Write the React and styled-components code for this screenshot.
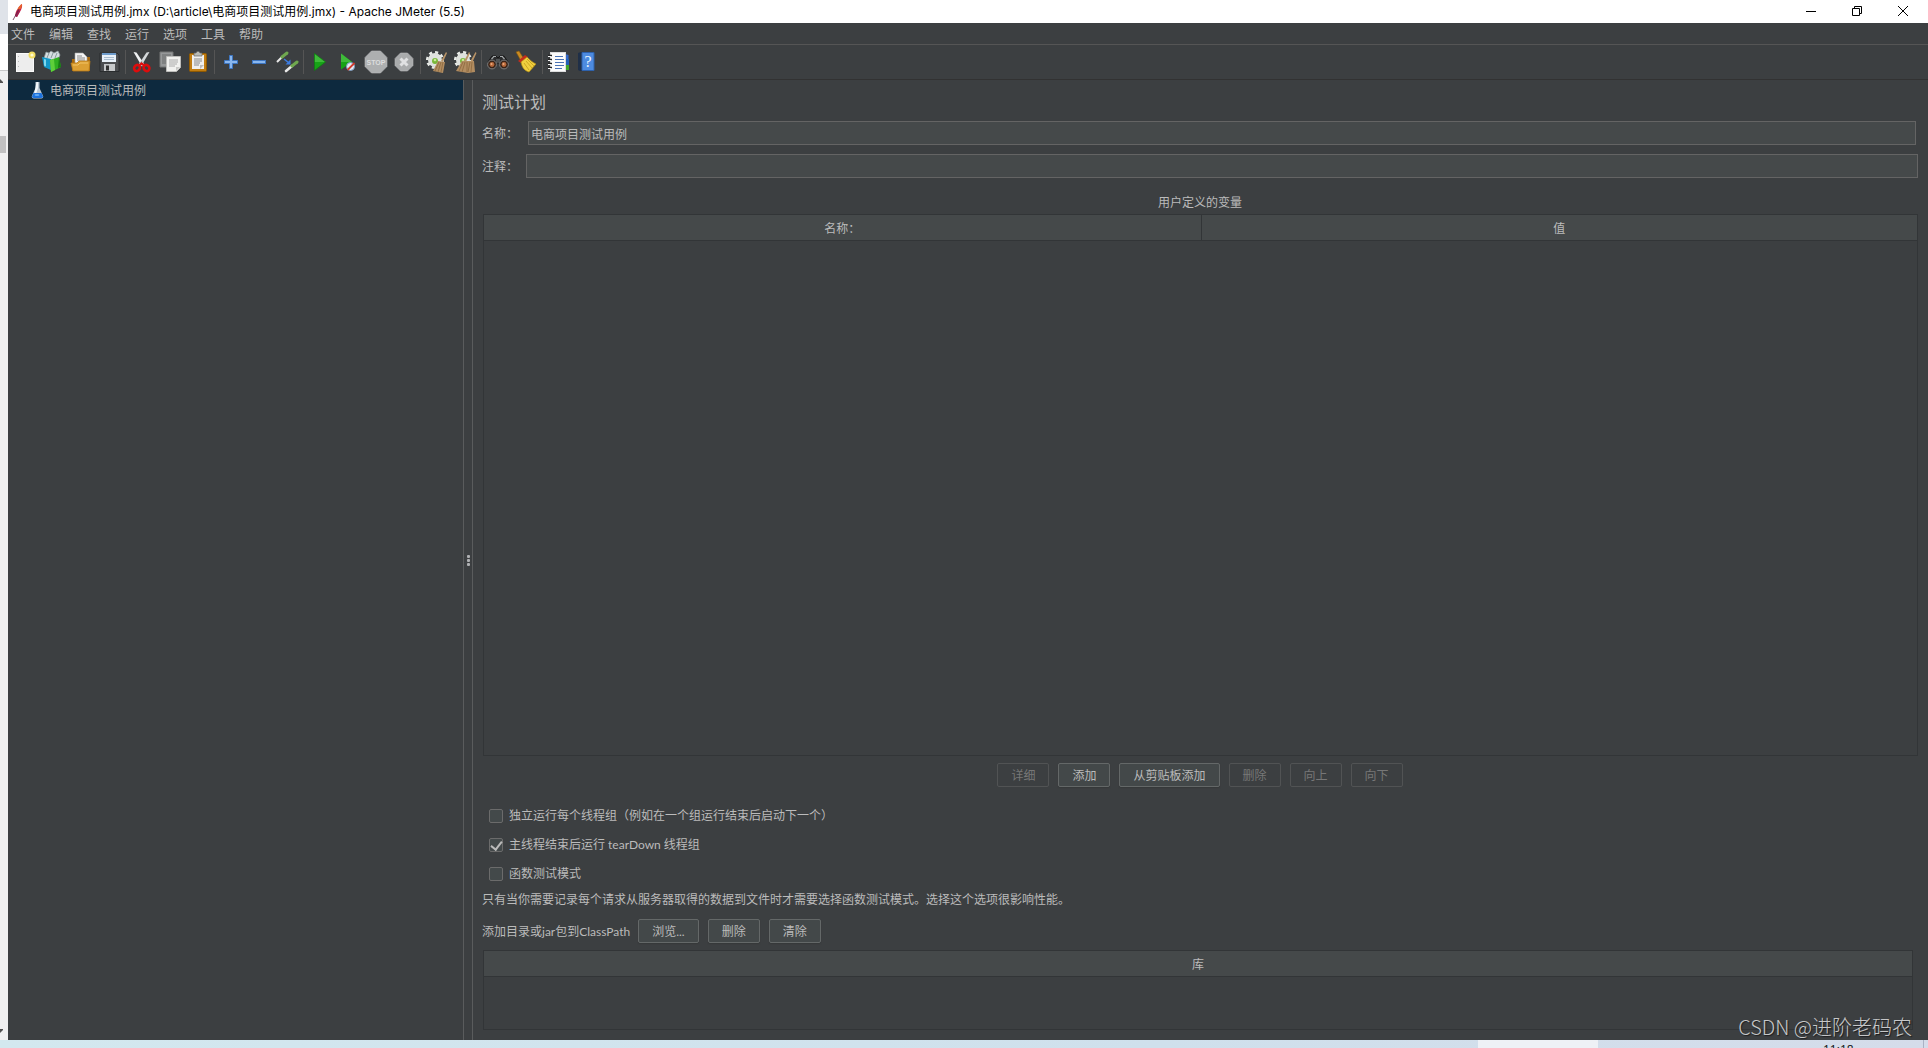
import { useState } from "react";
import styled, { createGlobalStyle, css } from "styled-components";

const GlobalStyle = createGlobalStyle`
    * {
        box-sizing: border-box;
    }
    body {
        margin: 0;
        background: #3c3f41;
        color: #bbbbbb;
        font-family: Lato, "Noto Sans CJK SC", sans-serif;
        font-size: 12px;
        line-height: 16px;
    }
    button, input {
        font: inherit;
        color: inherit;
        margin: 0;
    }
`;

const Screen = styled.div`
    position: relative;
    display: flex;
    flex-direction: column;
    min-height: 100vh;
`;

const Desktop = styled.div`
    flex: 1;
    display: flex;
`;

/* the window behind, only its scroll bar sticks out */
const BackWindow = styled.div`
    width: 8px;
    display: flex;
    flex-direction: column;
    background: #f0f0f0;
`;

const BackTabs = styled.div`
    height: 34px;
    background: #dfe3e9;
`;

const BackHeader = styled.div`
    height: 37px;
    background: #ffffff;
    border-bottom: 1px solid #c8c8c8;
`;

const BackScroll = styled.div`
    flex: 1;
    display: flex;
    flex-direction: column;
    padding: 8px 2px 7px 0;

    svg {
        display: block;
    }
`;

const BackThumb = styled.div`
    height: 17px;
    margin: 53px 0 auto;
    background: #c1c1c1;
`;

const AppWindow = styled.div`
    flex: 1;
    min-width: 0;
    display: flex;
    flex-direction: column;
    background: #3c3f41;
`;

const TitleBar = styled.header`
    display: flex;
    align-items: center;
    height: 23px;
    padding: 0 2px 0 4px;
    background: #ffffff;
    color: #000000;
`;

const WindowTitle = styled.h1`
    flex: 1;
    margin: 0 0 0 6px;
    font-family: Inter, "Noto Sans CJK SC", sans-serif;
    font-size: 12px;
    font-weight: 400;
    line-height: 20px;
`;

const WindowButton = styled.button`
    display: flex;
    align-items: center;
    justify-content: center;
    width: 46px;
    height: 20px;
    padding: 0;
    border: 0;
    background: none;
`;

const MenuBar = styled.nav`
    display: flex;
    align-items: center;
    gap: 14px;
    height: 22px;
    padding: 2px 3px 0;
    border-bottom: 1px solid #555555;
`;

const MenuItem = styled.button`
    padding: 0;
    border: 0;
    background: none;
    white-space: nowrap;
`;

const ToolBar = styled.div`
    display: flex;
    align-items: center;
    height: 35px;
    padding: 0 3px;
    border-bottom: 1px solid #323232;
`;

const ToolButton = styled.button`
    display: flex;
    align-items: center;
    justify-content: center;
    width: 28px;
    height: 28px;
    padding: 0;
    border: 0;
    background: none;
`;

const ToolSeparator = styled.span`
    width: 1px;
    height: 24px;
    margin: 0 2px;
    background: #555555;
`;

const SplitPane = styled.div`
    flex: 1;
    display: flex;
`;

const Tree = styled.aside`
    width: 456px;
    flex-shrink: 0;
    border-right: 1px solid #5a5c5d;
`;

const TreeRow = styled.div`
    display: flex;
    align-items: center;
    gap: 6px;
    height: 20px;
    padding: 2px 0 0 23px;
    background: #0d293e;
`;

const Divider = styled.div`
    display: flex;
    flex-direction: column;
    align-items: center;
    justify-content: center;
    gap: 1px;
    width: 9px;
    flex-shrink: 0;
    border-right: 1px solid #5a5c5d;
`;

const DividerDot = styled.span`
    width: 3px;
    height: 3px;
    border-radius: 1px;
    background: #afb1b3;
`;

const Panel = styled.main`
    flex: 1;
    min-width: 0;
    display: flex;
    flex-direction: column;
    padding: 10px 10px 10px 9px;
`;

const PanelTitle = styled.h2`
    margin: 0 0 7px;
    font-size: 16px;
    font-weight: 400;
    line-height: 24px;
`;

const Field = styled.div`
    display: flex;
    align-items: center;
    gap: ${(props) => (props.$inset ? "10px" : "8px")};
    padding-right: ${(props) => (props.$inset ? "2px" : "0")};
    margin-bottom: ${(props) => (props.$inset ? "9px" : "16px")};
`;

const FieldLabel = styled.label`
    width: 36px;
    flex-shrink: 0;
    padding-top: 2px;
    white-space: nowrap;
`;

const TextInput = styled.input`
    flex: 1;
    min-width: 0;
    height: 24px;
    padding: 0 2px;
    border: 1px solid #646464;
    background: #45494a;
    outline: none;
`;

const TableTitle = styled.h3`
    margin: 0 0 3px;
    padding-top: 1px;
    font-size: 12px;
    font-weight: 400;
    text-align: center;
`;

const TableBox = styled.div`
    margin-left: 1px;
    border: 1px solid #323537;
    ${(props) =>
        props.$grow
            ? css`
                  flex: 1;
              `
            : css`
                  height: 80px;
                  margin-right: 5px;
              `}
`;

const DataTable = styled.table`
    width: 100%;
    table-layout: fixed;
    border-collapse: separate;
    border-spacing: 0;

    th {
        height: 26px;
        padding: 3px 0 0;
        background: #45494a;
        border-bottom: 1px solid #323537;
        font-weight: 400;
    }
    th + th {
        border-left: 1px solid #323537;
    }
`;

const ButtonRow = styled.div`
    display: flex;
    align-items: center;
    justify-content: ${(props) => (props.$center ? "center" : "flex-start")};
    gap: 9px;
    margin: ${(props) => (props.$center ? "7px 0 14px" : "11px 0 7px")};
`;

const Button = styled.button`
    height: 24px;
    padding: 2px 13px 0;
    border: 1px solid #646868;
    border-radius: 2px;
    background: #434849;
    box-shadow: 0 1px 1px #36393a;
    white-space: nowrap;

    &:disabled {
        color: #777777;
        background: none;
        border-color: #515354;
        box-shadow: none;
    }
`;

const CheckLabel = styled.label`
    display: flex;
    align-items: center;
    align-self: flex-start;
    gap: 6px;
    height: 29px;
    padding-left: 7px;
`;

const CheckBox = styled.input`
    appearance: none;
    display: flex;
    justify-content: center;
    width: 14px;
    height: 14px;
    border: 1px solid #6b6b6b;
    border-radius: 2px;
    background: #43494a;

    &:checked::after {
        content: "";
        width: 5px;
        height: 9px;
        border: solid #bbbbbb;
        border-width: 0 2px 2px 0;
        transform: rotate(38deg);
    }
`;

const Note = styled.p`
    margin: 4px 0 0;
`;

const ClassPathLabel = styled.span`
    padding-top: 1px;
    margin-right: -1px;
`;

const Taskbar = styled.footer`
    display: flex;
    height: 8px;
    overflow: hidden;
    background: linear-gradient(90deg, #d3e8ef, #cfe0ec 60%, #d5dcea);
`;

const TaskSpace = styled.div`
    flex: 1;
`;

const ActiveTask = styled.div`
    width: 120px;
    margin-right: 225px;
    background: #eef1f6;
`;

const Clock = styled.time`
    width: 101px;
    padding-top: 2px;
    border-right: 1px solid #a9b2c4;
    color: #111111;
    font-family: "Open Sans", sans-serif;
`;

const TaskEnd = styled.div`
    width: 4px;
`;

const Watermark = styled.div`
    position: absolute;
    right: 16px;
    bottom: 7px;
    color: #c6c7c8;
    font-family: "Noto Sans CJK SC", sans-serif;
    font-size: 20px;
    font-weight: 300;
    line-height: 28px;
    text-shadow: 1px 1px 1px #1c1d1e;
    pointer-events: none;
`;

const Svg = ({ children, size = 24 }) => (
    <svg width={size} height={size} viewBox={`0 0 ${size} ${size}`} aria-hidden="true">
        {children}
    </svg>
);

const NewIcon = () => (
    <Svg>
        <rect x="3.5" y="3.5" width="17" height="18" fill="#ededed" stroke="#fafafa" />
        <path d="M5.5 6v13" stroke="#bbb" strokeDasharray="1 4" />
        <circle cx="19" cy="5" r="3.5" fill="#f1dc62" />
        <circle cx="19" cy="5" r="1.6" fill="#fffbd0" />
    </Svg>
);

const TemplatesIcon = () => (
    <Svg>
        <path d="M3 8l2-6 3 1 2-2 3 2 4-2 2 4-2 5-12 2z" fill="#d4dde0" stroke="#8b999e" strokeWidth=".7" />
        <path d="M6 8l2-5M10 8l2-5M14 8l2-5" stroke="#87969c" />
        <path d="M1 7l9 2v11l-7-3z" fill="#1398c8" />
        <path d="M3 9l2 .5v7l-2-1z" fill="#7fd8ef" />
        <path d="M9 10l9-3 2 10-10 5z" fill="#2fae20" />
        <path d="M9 10l4-1 1 11-4 2z" fill="#5ed03a" />
        <path d="M18 7l2 10-3 1z" fill="#177c13" />
    </Svg>
);

const OpenIcon = () => (
    <Svg>
        <path d="M3 9h4l2-2h12v14H3z" fill="#a8690c" />
        <path d="M6 3h8l4 4v9H6z" fill="#f4f4f4" stroke="#aaa" strokeWidth=".6" />
        <path d="M8 6h5M8 8h8M8 10h8" stroke="#888" />
        <path d="M2 13h6l2-2h11l-1 10H4z" fill="#dca034" stroke="#b87a17" strokeWidth=".8" />
        <path d="M4 15h5l2-2h8" stroke="#f2c466" fill="none" />
    </Svg>
);

const SaveIcon = () => (
    <Svg>
        <path d="M3 3h17l2 2v16.500H3z" fill="#4b4d50" stroke="#25272a" strokeWidth=".8" />
        <path d="M5 3h14v9H5z" fill="#e8f0f8" />
        <path d="M5 3h14v2H5z" fill="#6d9bcb" />
        <path d="M7 7.500h10M7 9.500h10" stroke="#a8bccf" />
        <path d="M7 14h11v7H7z" fill="#c5c7c9" />
        <path d="M9 15.500h3v5H9z" fill="#333" />
    </Svg>
);

const CutIcon = () => (
    <Svg>
        <path d="M3.500 2l3 .5 8 12-2.500 2z" fill="#f0f2f3" />
        <path d="M19.500 2l-3 .5-8 12 2.500 2z" fill="#d5d9db" />
        <path d="M12 11l-3 4" stroke="#8d9193" strokeWidth=".8" />
        <ellipse cx="7" cy="18" rx="2.800" ry="3.200" transform="rotate(35 7 18)" fill="none" stroke="#dd0d0d" strokeWidth="2.600" />
        <ellipse cx="16.500" cy="18" rx="2.800" ry="3.200" transform="rotate(-35 16.500 18)" fill="none" stroke="#dd0d0d" strokeWidth="2.600" />
        <path d="M8.500 16l3-2.500 3.500 2.500" stroke="#dd0d0d" strokeWidth="2.200" fill="none" />
    </Svg>
);

const CopyIcon = () => (
    <Svg>
        <path d="M2 2h13v15H2z" fill="#969899" stroke="#747677" />
        <path d="M4 5h9M4 7h7M4 9h5M4 11h4M4 13h4" stroke="#686a6b" />
        <path d="M8.500 6.500h14v11l-4 4h-10z" fill="#f1f1ef" stroke="#bdbdbb" />
        <path d="M11 10h9M11 12h9M11 14h8M11 16h6" stroke="#aaa" />
        <path d="M18 21v-4h4z" fill="#c9c9c7" />
    </Svg>
);

const PasteIcon = () => (
    <Svg>
        <rect x="3.500" y="3.500" width="17" height="18" rx="1" fill="#c17d11" stroke="#8f5902" />
        <path d="M6 5h12v14H6z" fill="#f0f0ee" />
        <path d="M8 9h8M8 11h8M8 13h6M8 15h5" stroke="#888" />
        <path d="M14 19v-4h4z" fill="#bbb" />
        <path d="M8 3h2l1-1.500h2L14 3h2v3H8z" fill="#b9bbb6" stroke="#666" strokeWidth=".7" />
    </Svg>
);

const PlusIcon = () => (
    <Svg>
        <path d="M10.500 5.500h3v5h5v3h-5v5h-3v-5h-5v-3h5z" fill="#8ab7ee" stroke="#3d76c2" />
    </Svg>
);

const MinusIcon = () => (
    <Svg>
        <rect x="5.500" y="10.500" width="13" height="3" fill="#8ab7ee" stroke="#3d76c2" />
    </Svg>
);

const ToggleIcon = () => (
    <Svg>
        <path d="M2 12l6-6" stroke="#e8e8e8" strokeWidth="2" />
        <path d="M7 7l5-4" stroke="#6fa84f" strokeWidth="3" strokeLinecap="round" />
        <path d="M11 21l6-5" stroke="#e8e8e8" strokeWidth="2.600" strokeLinecap="round" />
        <path d="M17 16l5-4" stroke="#6fa84f" strokeWidth="3" strokeLinecap="round" />
        <path d="M9 9l5 4" stroke="#3b7be0" strokeWidth="1.600" />
        <path d="M15.500 9.500v5h-5z" fill="#3b7be0" />
    </Svg>
);

const StartIcon = () => (
    <Svg>
        <path d="M6.500 3.500v17L17.500 12z" fill="#17a317" />
        <path d="M6.500 3.500l11 8.500h-11z" fill="#3fba3a" />
        <path d="M6.500 3.500v17L17.500 12z" fill="none" stroke="#0b7d10" strokeWidth=".7" />
    </Svg>
);

const StartNoPauseIcon = () => (
    <Svg>
        <path d="M5 3.500v16L16 12z" fill="#17a317" />
        <path d="M5 3.500L16 12H5z" fill="#3fba3a" />
        <circle cx="14.500" cy="16.500" r="4" fill="#e3eaf2" stroke="#7a9cc4" />
        <path d="M11.500 20l7-7" stroke="#d13a2c" strokeWidth="1.800" />
    </Svg>
);

const StopIcon = () => (
    <Svg>
        <path d="M7.500 1h9L23 7.500v9L16.500 23h-9L1 16.500v-9z" fill="#adafb0" stroke="#b9bbbc" strokeWidth=".6" />
        <text x="12" y="15" textAnchor="middle" fontFamily="Liberation Sans, sans-serif" fontSize="7" fontWeight="700" fill="#dcdddd">
            STOP
        </text>
    </Svg>
);

const ShutdownIcon = () => (
    <Svg>
        <path d="M8.500 3h7L21 8.500v7L15.500 21h-7L3 15.500v-7z" fill="#a9abac" stroke="#b9bbbc" strokeWidth=".6" />
        <path d="M8.500 8.500l7 7M15.500 8.500l-7 7" stroke="#e0e1e2" strokeWidth="3" />
    </Svg>
);

const Gear = () => (
    <>
        <circle cx="10" cy="10" r="7" fill="#dfe2de" />
        <circle cx="10" cy="10" r="7.800" fill="none" stroke="#e8ebe7" strokeWidth="2.500" strokeDasharray="3.100 3" />
        <circle cx="10" cy="11" r="3" fill="#79b83a" />
        <circle cx="10" cy="10" r="1.300" fill="#c8ea96" />
    </>
);

const ClearIcon = () => (
    <Svg>
        <Gear />
        <path d="M21 2l1 1-4 9-2-1z" fill="#b89468" />
        <path d="M13 11l7 1-2 11-10-2z" fill="#b18c60" />
        <path d="M14 12l-4 9M16 12l-3 10M18 12l-2 10" stroke="#8a673d" strokeWidth=".8" />
    </Svg>
);

const ClearAllIcon = () => (
    <Svg>
        <Gear />
        <path d="M16 2l1 1-4 9-2-1zM22.500 2l1 1-4 9-2-1z" fill="#b89468" />
        <path d="M9 11h12l1 11-7 1-12-2z" fill="#b18c60" />
        <path d="M10 12l-4 9M12 12l-3 10M14 12v10M17 12l-2 10M19 12l-1 10" stroke="#8a673d" strokeWidth=".8" />
    </Svg>
);

const SearchIcon = () => (
    <Svg>
        <path d="M2 12l4-6h4l2 2 2-2h4l4 6-1 4h-6l-3-4-3 4H3z" fill="#2b2c2d" stroke="#161616" />
        <path d="M7 6.500h3M14 6.500h3M5.500 9l2-2M18.500 9l-2-2" stroke="#a3a7a9" strokeWidth="1.200" />
        <path d="M11 9v4M13 9v4" stroke="#777b7d" />
        <circle cx="6" cy="14.500" r="4.400" fill="#3a2418" stroke="#858789" strokeWidth=".9" />
        <circle cx="18" cy="14.500" r="4.400" fill="#3a2418" stroke="#858789" strokeWidth=".9" />
        <circle cx="6" cy="14.500" r="2.400" fill="#b8683a" />
        <circle cx="18" cy="14.500" r="2.400" fill="#b8683a" />
        <circle cx="5.500" cy="14" r="1" fill="#e8ab80" />
        <circle cx="17.500" cy="14" r="1" fill="#e8ab80" />
    </Svg>
);

const ResetSearchIcon = () => (
    <Svg>
        <path d="M2 2l3-1 5 8-3 2z" fill="#c98b22" stroke="#85580d" strokeWidth=".6" />
        <path d="M4 11l7-6 3 2-7 6z" fill="#c22b1c" />
        <path d="M7 12l6-5c3 3 5 5 9 7l-7 8c-4-1-7-4-8-10z" fill="#f0cf3f" stroke="#b18d12" strokeWidth=".7" />
        <path d="M10 13l5 7M12 11l6 7M13 9l7 7" stroke="#c19c1b" strokeWidth=".8" />
    </Svg>
);

const FunctionIcon = () => (
    <Svg>
        <path d="M18 4l3.500 1v4H18z" fill="#3268c9" />
        <path d="M18 9h4v6h-4z" fill="#2360b8" />
        <path d="M18 15h4v5h-4z" fill="#41a62a" />
        <rect x="3.500" y="2.500" width="15" height="19" fill="#fcfcfc" stroke="#ddd" />
        <path d="M8 6.500h8M8 9.500h9M8 12.500h9M8 15.500h9M8 18.500h7" stroke="#4b73b5" />
        <path d="M1 5.500h4M1 9.500h4M1 13.500h4M1 17.500h4" stroke="#202020" strokeWidth="1.400" />
        <path d="M1 6.500h3M1 10.500h3M1 14.500h3M1 18.500h3" stroke="#f4f4f4" />
    </Svg>
);

const HelpIcon = () => (
    <Svg>
        <path d="M3 3l3-1h12v19H5l-2-1z" fill="#1f2f47" />
        <path d="M7 2.500h12v18H7z" fill="#4d8be0" stroke="#2e62ad" />
        <text x="13" y="17" textAnchor="middle" fontFamily="Liberation Serif, serif" fontSize="16" fill="#eaf3ff">
            ?
        </text>
    </Svg>
);

const FlaskIcon = () => (
    <svg width="13" height="18" viewBox="0 0 13 18" aria-hidden="true">
        <path d="M4.500 0h4v6l3.800 8.500q0 2-2 2h-7.600q-2 0-2-2L4.500 6z" fill="#b9c6d2" />
        <path d="M5.500 0h1.500v6l-2 6-2 1z" fill="#f4f8fb" />
        <path d="M2.500 11h8l1.500 3.500q0 1.500-2 1.500h-7q-2 0-2-1.500z" fill="#1c72dd" />
        <ellipse cx="6" cy="13" rx="2.500" ry="1" fill="#62aaf5" />
    </svg>
);

const FeatherIcon = () => (
    <svg width="12" height="18" viewBox="0 0 12 18" aria-hidden="true">
        <path d="M9.500 1Q11 2 9 7l-4 7-2-1Q3 8 9.500 1z" fill="#c9214a" />
        <path d="M9.500 1Q11 2 8.500 6L5 7Q7 3 9.500 1z" fill="#e8632c" />
        <path d="M3 13l3-6 2 1-3 6z" fill="#9c1f50" />
        <path d="M7 6l-6 11" stroke="#5d2a4c" strokeWidth=".8" />
    </svg>
);

const menus = ["文件", "编辑", "查找", "运行", "选项", "工具", "帮助"];

const toolGroups = [
    [
        ["新建", NewIcon],
        ["模板", TemplatesIcon],
        ["打开", OpenIcon],
        ["保存", SaveIcon],
    ],
    [
        ["剪切", CutIcon],
        ["复制", CopyIcon],
        ["粘贴", PasteIcon],
    ],
    [
        ["展开", PlusIcon],
        ["折叠", MinusIcon],
        ["切换", ToggleIcon],
    ],
    [
        ["启动", StartIcon],
        ["不停顿开始", StartNoPauseIcon],
        ["停止", StopIcon],
        ["关闭", ShutdownIcon],
    ],
    [
        ["清除", ClearIcon],
        ["清除全部", ClearAllIcon],
    ],
    [
        ["查找", SearchIcon],
        ["重置搜索", ResetSearchIcon],
    ],
    [
        ["函数助手", FunctionIcon],
        ["帮助", HelpIcon],
    ],
];

const tableActions = [
    { text: "详细", disabled: true },
    { text: "添加" },
    { text: "从剪贴板添加" },
    { text: "删除", disabled: true },
    { text: "向上", disabled: true },
    { text: "向下", disabled: true },
];

function ToolGroup({ tools, first }) {
    return (
        <>
            {!first && <ToolSeparator />}
            {tools.map(([label, Icon]) => (
                <ToolButton key={label} type="button" aria-label={label}>
                    <Icon />
                </ToolButton>
            ))}
        </>
    );
}

function TestPlan() {
    const [name, setName] = useState("电商项目测试用例");
    const [comment, setComment] = useState("");
    const [options, setOptions] = useState([
        { text: "独立运行每个线程组（例如在一个组运行结束后启动下一个）", checked: false },
        { text: "主线程结束后运行 tearDown 线程组", checked: true },
        { text: "函数测试模式", checked: false },
    ]);

    const toggle = (index) => {
        setOptions(options.map((o, i) => (i === index ? { ...o, checked: !o.checked } : o)));
    };

    return (
        <Panel>
            <PanelTitle>测试计划</PanelTitle>
            <Field $inset>
                <FieldLabel htmlFor="plan-name">名称：</FieldLabel>
                <TextInput id="plan-name" value={name} onChange={(e) => setName(e.target.value)} />
            </Field>
            <Field>
                <FieldLabel htmlFor="plan-comment">注释：</FieldLabel>
                <TextInput id="plan-comment" value={comment} onChange={(e) => setComment(e.target.value)} />
            </Field>

            <TableTitle>用户定义的变量</TableTitle>
            <TableBox $grow>
                <DataTable>
                    <thead>
                        <tr>
                            <th>名称：</th>
                            <th>值</th>
                        </tr>
                    </thead>
                </DataTable>
            </TableBox>
            <ButtonRow $center>
                {tableActions.map((action) => (
                    <Button key={action.text} type="button" disabled={action.disabled}>
                        {action.text}
                    </Button>
                ))}
            </ButtonRow>

            {options.map((option, index) => (
                <CheckLabel key={option.text}>
                    <CheckBox type="checkbox" checked={option.checked} onChange={() => toggle(index)} />
                    {option.text}
                </CheckLabel>
            ))}
            <Note>只有当你需要记录每个请求从服务器取得的数据到文件时才需要选择函数测试模式。选择这个选项很影响性能。</Note>

            <ButtonRow>
                <ClassPathLabel>添加目录或jar包到ClassPath</ClassPathLabel>
                <Button type="button">浏览...</Button>
                <Button type="button">删除</Button>
                <Button type="button">清除</Button>
            </ButtonRow>
            <TableBox>
                <DataTable>
                    <thead>
                        <tr>
                            <th>库</th>
                        </tr>
                    </thead>
                </DataTable>
            </TableBox>
        </Panel>
    );
}

function App() {
    return (
        <Screen>
            <GlobalStyle />
            <Desktop>
                <BackWindow>
                    <BackTabs />
                    <BackHeader />
                    <BackScroll>
                        <svg width="4" height="4" viewBox="0 0 4 4">
                            <path d="M0 0l3 3v1H0z" fill="#505050" />
                        </svg>
                        <BackThumb />
                        <svg width="4" height="4" viewBox="0 0 4 4">
                            <path d="M0 4l3-3V0H0z" fill="#505050" />
                        </svg>
                    </BackScroll>
                </BackWindow>
                <AppWindow>
                    <TitleBar>
                        <FeatherIcon />
                        <WindowTitle>电商项目测试用例.jmx (D:\article\电商项目测试用例.jmx) - Apache JMeter (5.5)</WindowTitle>
                        <WindowButton type="button" aria-label="最小化">
                            <Svg size={12}>
                                <path d="M1 5.500h10" stroke="#000" />
                            </Svg>
                        </WindowButton>
                        <WindowButton type="button" aria-label="还原">
                            <Svg size={12}>
                                <path d="M1.500 2.500h7v7h-7zM3.500 2.500v-2h7v7h-2" fill="none" stroke="#000" />
                            </Svg>
                        </WindowButton>
                        <WindowButton type="button" aria-label="关闭">
                            <Svg size={12}>
                                <path d="M1 0l10 10M11 0L1 10" stroke="#000" />
                            </Svg>
                        </WindowButton>
                    </TitleBar>
                    <MenuBar>
                        {menus.map((menu) => (
                            <MenuItem key={menu} type="button">
                                {menu}
                            </MenuItem>
                        ))}
                    </MenuBar>
                    <ToolBar>
                        {toolGroups.map((tools, index) => (
                            <ToolGroup key={index} tools={tools} first={index === 0} />
                        ))}
                    </ToolBar>
                    <SplitPane>
                        <Tree>
                            <TreeRow>
                                <FlaskIcon />
                                电商项目测试用例
                            </TreeRow>
                        </Tree>
                        <Divider>
                            <DividerDot />
                            <DividerDot />
                            <DividerDot />
                        </Divider>
                        <TestPlan />
                    </SplitPane>
                </AppWindow>
            </Desktop>
            <Taskbar>
                <TaskSpace />
                <ActiveTask />
                <Clock>11:18</Clock>
                <TaskEnd />
            </Taskbar>
            <Watermark>CSDN @进阶老码农</Watermark>
        </Screen>
    );
}

export default App;
